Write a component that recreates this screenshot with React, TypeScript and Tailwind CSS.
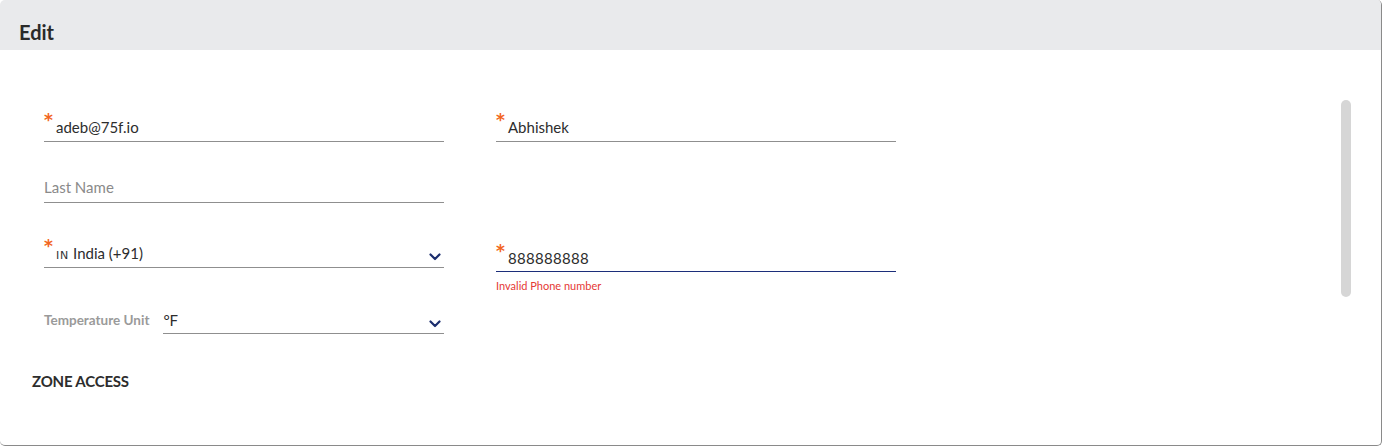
import React from "react";

const Chevron = () => (
  <svg width="12" height="8" viewBox="0 0 12 8" className="block">
    <path d="M1.5 1.5 L6 6 L10.5 1.5" fill="none" stroke="#1c2e6e" strokeWidth="2.2" strokeLinecap="round" strokeLinejoin="round" />
  </svg>
);

const Star = () => (
  <span className="text-[#f26522] text-[17px] leading-[18px] w-[12px] shrink-0 relative -top-[7px] font-bold" style={{ fontFamily: "'DejaVu Sans', sans-serif" }}>*</span>
);

export default function App() {
  return (
    <div className="w-[1383px] h-[447px] bg-white" style={{ fontFamily: "Lato, 'Open Sans', sans-serif" }}>
      <div className="w-[1382px] h-[446px] rounded-[5px] border-r border-b border-[#8a8a8a] overflow-hidden flex flex-col relative">
        <div className="h-[50px] bg-[#e9eaec] flex items-end pl-[19px] pb-[6px] shrink-0">
          <span className="text-[20px] font-bold text-[#2a2a2a] leading-[24px]">Edit</span>
        </div>
        <div className="flex-1 relative">
          <div className="pl-[44px] pt-[61px]">
            <div className="flex gap-[52px]">
              <div className="w-[400px] h-[31px] border-b border-[#8f8f8f] flex items-end pb-[5px]">
                <Star />
                <span className="text-[15px] text-[#2d2d2d] leading-[18px]">adeb@75f.io</span>
              </div>
              <div className="w-[400px] h-[31px] border-b border-[#8f8f8f] flex items-end pb-[5px]">
                <Star />
                <span className="text-[15px] text-[#2d2d2d] leading-[18px]">Abhishek</span>
              </div>
            </div>
            <div className="mt-[29px] w-[400px] h-[32px] border-b border-[#8f8f8f] flex items-end pb-[6px]">
              <span className="text-[15px] text-[#8a8a8a] leading-[18px]">Last Name</span>
            </div>
            <div className="flex gap-[52px] mt-[33px] items-start">
              <div className="w-[400px] h-[32px] border-b border-[#8f8f8f] flex items-end pb-[5px]">
                <Star />
                <span className="leading-[18px] flex items-baseline relative top-[3px]">
                  <span className="text-[11px] text-[#333] tracking-[0.8px] mr-[4px]" style={{ fontFamily: "'DejaVu Sans', sans-serif" }}>IN</span>
                  <span className="text-[15px] text-[#2d2d2d]">India (+91)</span>
                </span>
                <span className="ml-auto mr-[3px] mb-[1px]"><Chevron /></span>
              </div>
              <div className="flex flex-col">
                <div className="w-[400px] h-[36px] border-b-[1.5px] border-[#1c2e7a] flex items-end pb-[4px]">
                  <Star />
                  <span className="text-[15px] text-[#2d2d2d] leading-[18px] tracking-[0.3px]">888888888</span>
                </div>
                <span className="text-[11px] text-[#e53935] mt-[8px] leading-[12px]">Invalid Phone number</span>
              </div>
            </div>
            <div className="flex items-end mt-[17px] w-[400px]">
              <span className="text-[13.5px] font-bold text-[#9a9a9a] leading-[18px] mr-[14px] pb-[5px]">Temperature Unit</span>
              <div className="flex-1 h-[25px] border-b border-[#8f8f8f] flex items-end pb-[4px]">
                <span className="text-[15px] text-[#2d2d2d] leading-[18px]">°F</span>
                <span className="ml-auto mr-[3px] mb-[1px]"><Chevron /></span>
              </div>
            </div>
          </div>
          <div className="pl-[32px] mt-[35px]">
            <span className="text-[15px] font-bold text-[#2d2d2d] tracking-[-0.2px]">ZONE ACCESS</span>
          </div>
          <div className="absolute left-[1341px] top-[50px] w-[10px] h-[197px] rounded-full bg-[#d6d6d6]" />
        </div>
      </div>
    </div>
  );
}
